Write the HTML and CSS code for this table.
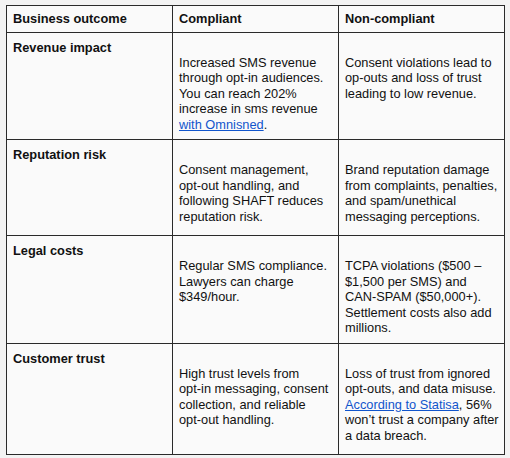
FILE: index.html
```html
<!DOCTYPE html>
<html lang="en">
     <head>
          <meta http-equiv="Content-type" content="text/html; charset=utf-8">
          <title>SMS compliance outcomes</title>
          <link rel="stylesheet" href="styles.css">
     </head>
     <body>
          <table class="outcomes">
               <thead>
                    <tr>
                         <th>Business outcome</th>
                         <th>Compliant</th>
                         <th>Non-compliant</th>
                    </tr>
               </thead>
               <tbody>
                    <tr>
                         <td class="label">Revenue impact</td>
                         <td><p>Increased SMS revenue<br>through opt-in audiences.<br>You can reach 202%<br>increase in sms revenue<br><a href="#">with Omnisned</a>.</p></td>
                         <td><p>Consent violations lead to<br>op-outs and loss of trust<br>leading to low revenue.</p></td>
                    </tr>
                    <tr class="tall">
                         <td class="label">Reputation risk</td>
                         <td><p>Consent management,<br>opt-out handling, and<br>following SHAFT reduces<br>reputation risk.</p></td>
                         <td><p>Brand reputation damage<br>from complaints, penalties,<br>and spam/unethical<br>messaging perceptions.</p></td>
                    </tr>
                    <tr>
                         <td class="label">Legal costs</td>
                         <td><p>Regular SMS compliance.<br>Lawyers can charge<br>$349/hour.</p></td>
                         <td><p>TCPA violations ($500 –<br>$1,500 per SMS) and<br>CAN-SPAM ($50,000+).<br>Settlement costs also add<br>millions.</p></td>
                    </tr>
                    <tr class="last">
                         <td class="label">Customer trust</td>
                         <td><p>High trust levels from<br>opt-in messaging, consent<br>collection, and reliable<br>opt-out handling.</p></td>
                         <td><p>Loss of trust from ignored<br>opt-outs, and data misuse.<br><a href="#">According to Statisa</a>, 56%<br>won’t trust a company after<br>a data breach.</p></td>
                    </tr>
               </tbody>
          </table>
     </body>
</html>
```

FILE: styles.css
```css
html{
     height: 100%;
}
body{
     margin: 0;
     padding: 5px 6px;
     background-color: #f3f3f3;
     font-family: "Liberation Sans", Arial, sans-serif;
     font-size: 12.8px;
     color: #111;
}
.outcomes{
     width: 499px;
     border-collapse: collapse;
     table-layout: fixed;
     background-color: #fafafa;
     border: 1px solid #2a2a2a;
}
.outcomes th,
.outcomes td{
     border: 1px solid #2a2a2a;
     padding: 7px 6px 7px 6px;
     text-align: left;
     vertical-align: top;
     line-height: 15.5px;
     white-space: nowrap;
}
.outcomes th{
     padding-top: 5px;
     padding-bottom: 5px;
     font-weight: bold;
}
.outcomes td.label{
     font-weight: bold;
}
.outcomes p{
     margin: 15px 0 0 0;
}
.outcomes a{
     color: #1155cc;
     text-decoration: underline;
}
.tall td{
     height: 81px;
}
.last td{
     padding-bottom: 11px;
}
```
